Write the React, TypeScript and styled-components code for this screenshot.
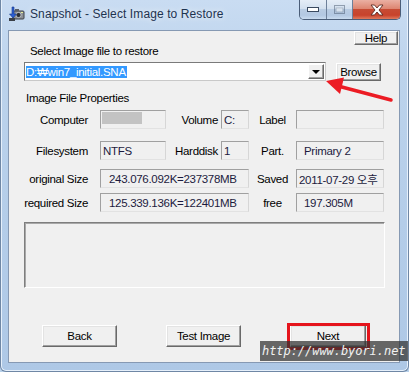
import React from "react";
import styled, { createGlobalStyle } from "styled-components";

const GlobalStyle = createGlobalStyle`
  html, body {
    margin: 0;
    padding: 0;
    width: 409px;
    height: 372px;
    overflow: hidden;
    background: #b9d1ea;
  }
`;

const Window = styled.div`
  position: relative;
  box-sizing: border-box;
  width: 409px;
  height: 372px;
  display: flex;
  flex-direction: column;
  border: 1px solid #6f87a5;
  border-top: none;
  border-radius: 0 0 6px 6px;
  background: linear-gradient(180deg, #c9dcf2 0%, #bcd3ec 20%, #b4cde9 60%, #aec8e6 100%);
  box-shadow: inset 1px 0 0 #e6f0fb, inset -1px 0 0 #e6f0fb, inset 0 -1px 0 #e6f0fb;
  font-family: "Liberation Sans", Arial, sans-serif;
  overflow: hidden;
`;

const TitleBar = styled.div`
  height: 30px;
  display: flex;
  align-items: flex-start;
  padding: 0 7px 0 7px;
`;

const TitleIcon = styled.svg`
  width: 17px;
  height: 16px;
  margin-top: 6px;
  flex: none;
`;

const TitleText = styled.div`
  margin: 6px 0 0 5px;
  font-size: 12px;
  line-height: 16px;
  color: #1e3350;
  letter-spacing: 0.1px;
  text-shadow: 0 0 6px rgba(255, 255, 255, 0.9);
`;

const WinButtons = styled.div`
  margin-left: auto;
  display: flex;
  height: 19px;
  border: 1px solid #4a5d78;
  border-top: none;
  border-radius: 0 0 5px 5px;
  overflow: hidden;
`;

const WinButton = styled.div<{ $w: number; $close?: boolean; $dim?: boolean }>`
  width: ${({ $w }) => $w}px;
  display: flex;
  align-items: center;
  justify-content: center;
  background: ${({ $close }) =>
    $close
      ? "linear-gradient(180deg, #eab0a3 0%, #dd8672 45%, #c64b34 50%, #c8432c 80%, #e07a5d 100%)"
      : "linear-gradient(180deg, #e5edf7 0%, #d3e0ef 45%, #b9cce3 50%, #b3c8e2 80%, #c9dbef 100%)"};
  & + & {
    border-left: 1px solid #6d809a;
  }
  svg {
    opacity: ${({ $dim }) => ($dim ? 0.45 : 1)};
  }
`;

const Client = styled.div`
  position: relative;
  flex: 1;
  margin: 0 8px 8px 7px;
  background: #f0f0f0;
  border: 1px solid #8699b3;
  display: flex;
  flex-direction: column;
`;

const HelpRow = styled.div`
  display: flex;
  justify-content: flex-end;
  padding-right: 1px;
`;

const ClassicButton = styled.button<{ $w: number; $h: number; $marked?: boolean }>`
  position: relative;
  box-sizing: border-box;
  width: ${({ $w }) => $w}px;
  height: ${({ $h }) => $h}px;
  padding: 0;
  margin: 0;
  background: #f0f0f0;
  border: 1px solid;
  border-color: #ffffff #696969 #696969 #ffffff;
  box-shadow: inset -1px -1px 0 #a0a0a0, inset 1px 1px 0 #e3e3e3;
  font-family: "Liberation Sans", Arial, sans-serif;
  font-size: 11.5px;
  letter-spacing: -0.3px;
  color: #000;
  display: flex;
  align-items: center;
  justify-content: center;
  &::after {
    content: "";
    display: ${({ $marked }) => ($marked ? "block" : "none")};
    position: absolute;
    top: -3px;
    left: -4px;
    right: -5px;
    bottom: -4px;
    border: 3px solid #e5141c;
  }
`;

const SectionLabel = styled.div<{ $left: number; $top: number }>`
  padding-left: ${({ $left }) => $left}px;
  margin-top: ${({ $top }) => $top}px;
  font-size: 11.5px;
  line-height: 13px;
  letter-spacing: -0.3px;
  color: #000;
`;

const ComboRow = styled.div`
  display: flex;
  align-items: center;
  gap: 10px;
  padding-left: 15px;
  margin-top: 4px;
`;

const Combo = styled.div`
  box-sizing: border-box;
  width: 302px;
  height: 19px;
  background: #fff;
  border: 1px solid;
  border-color: #7a7a7a #c9c9c9 #c9c9c9 #7a7a7a;
  display: flex;
  align-items: center;
  padding: 0 1px 0 1px;
`;

const ComboValue = styled.span`
  background: #3399ff;
  color: #fff;
  font-size: 11.5px;
  line-height: 12px;
  letter-spacing: -0.3px;
  padding-right: 1px;
`;

const DropButton = styled.div`
  margin-left: auto;
  box-sizing: border-box;
  width: 16px;
  height: 15px;
  background: #f0f0f0;
  border: 1px solid;
  border-color: #ffffff #696969 #696969 #ffffff;
  box-shadow: inset -1px -1px 0 #a0a0a0;
  display: flex;
  align-items: center;
  justify-content: center;
  &::before {
    content: "";
    border-left: 4px solid transparent;
    border-right: 4px solid transparent;
    border-top: 4px solid #000;
    margin-top: 1px;
  }
`;

const PropRow = styled.div<{ $top: number }>`
  display: grid;
  grid-template-columns: 76px 66px 55px 28px 47px 88px;
  grid-template-rows: 19px;
  align-items: center;
  padding-left: 15px;
  margin-top: ${({ $top }) => $top}px;
`;

const PropLabel = styled.div<{ $align?: string; $pad?: number }>`
  text-align: ${({ $align }) => $align || "right"};
  padding-right: ${({ $pad }) => $pad ?? 0}px;
  font-size: 11.5px;
  letter-spacing: -0.3px;
  color: #000;
  white-space: nowrap;
`;

const Field = styled.div<{ $pad?: number; $span?: string }>`
  grid-column: ${({ $span }) => $span || "auto"};
  box-sizing: border-box;
  height: 19px;
  display: flex;
  align-items: center;
  padding-left: ${({ $pad }) => $pad ?? 2}px;
  border: 1px solid;
  border-color: #a0a0a0 #d6d6d6 #e2e2e2 #a0a0a0;
  background: #f0f0f0;
  font-size: 11.5px;
  letter-spacing: -0.3px;
  color: #1c1b3e;
  white-space: nowrap;
  font-family: "Liberation Sans", "Noto Sans CJK KR", sans-serif;
`;

const Blur = styled.div`
  width: 40px;
  height: 12px;
  background: #c3c3c3;
  margin-left: -1px;
  margin-top: -3px;
`;

const MessageBox = styled.div`
  box-sizing: border-box;
  width: 361px;
  height: 66px;
  margin: 10px 0 0 15px;
  border: 1px solid;
  border-color: #7e7e7e #ffffff #ffffff #7e7e7e;
  box-shadow: inset 1px 1px 0 #a8a8a8;
`;

const ButtonRow = styled.div`
  display: flex;
  gap: 49px;
  padding-left: 33px;
  margin-top: 37px;
`;

const Arrow = styled.svg`
  position: absolute;
  left: 318px;
  top: 72px;
  width: 80px;
  height: 34px;
  pointer-events: none;
`;

const Watermark = styled.div`
  position: absolute;
  right: 0;
  bottom: 10px;
  width: 148px;
  height: 20px;
  background: rgba(48, 48, 48, 0.72);
  color: #f2f2f2;
  font-family: "DejaVu Sans Mono", "Liberation Mono", monospace;
  font-style: italic;
  font-size: 12px;
  line-height: 20px;
  padding-left: 2px;
  box-sizing: border-box;
  white-space: nowrap;
  letter-spacing: -0.05px;
`;

export default function App() {
  return (
    <>
      <GlobalStyle />
      <Window>
        <TitleBar>
          <TitleIcon viewBox="0 0 17 16">
            <rect x="5" y="5" width="11" height="8" rx="1" fill="#8b8f95" stroke="#3d4148" />
            <rect x="7" y="3" width="4" height="2" fill="#5b6068" />
            <circle cx="10.5" cy="9" r="2.6" fill="#2b2f36" stroke="#d6d9de" strokeWidth="0.8" />
            <rect x="13" y="6" width="2" height="1" fill="#e8f09a" />
            <path d="M4 1 L4 8 L1.5 8 L5 12 L8.5 8 L6 8 L6 1 Z" fill="#2c5fd2" stroke="#173a8a" strokeWidth="0.6" />
            <rect x="1" y="12" width="6" height="3" fill="#3a3f47" />
          </TitleIcon>
          <TitleText>Snapshot - Select Image to Restore</TitleText>
          <WinButtons>
            <WinButton $w={26}>
              <svg width="12" height="5" viewBox="0 0 12 5">
                <rect x="0.5" y="0.5" width="11" height="4" fill="#fff" stroke="#3a4a60" />
              </svg>
            </WinButton>
            <WinButton $w={25} $dim>
              <svg width="11" height="9" viewBox="0 0 11 9">
                <rect x="0.5" y="0.5" width="10" height="8" fill="none" stroke="#3a4a60" />
                <rect x="2" y="3" width="7" height="4" fill="#fff" stroke="#3a4a60" strokeWidth="0.6" />
              </svg>
            </WinButton>
            <WinButton $w={47} $close>
              <svg width="14" height="12" viewBox="0 0 14 12">
                <path
                  d="M1 1 L4.5 1 L7 4 L9.5 1 L13 1 L9 6 L13 11 L9.5 11 L7 8 L4.5 11 L1 11 L5 6 Z"
                  fill="#fff"
                  stroke="#5a2a22"
                  strokeWidth="0.9"
                  strokeLinejoin="round"
                />
              </svg>
            </WinButton>
          </WinButtons>
        </TitleBar>

        <Client>
          <HelpRow>
            <ClassicButton $w={44} $h={14}>Help</ClassicButton>
          </HelpRow>
          <SectionLabel $left={21} $top={0}>Select Image file to restore</SectionLabel>
          <ComboRow>
            <Combo>
              <ComboValue>D:₩win7_initial.SNA</ComboValue>
              <DropButton />
            </Combo>
            <ClassicButton $w={45} $h={18}>Browse</ClassicButton>
          </ComboRow>
          <SectionLabel $left={17} $top={11}>Image File Properties</SectionLabel>

          <PropRow $top={5}>
            <PropLabel $pad={12}>Computer</PropLabel>
            <Field>
              <Blur />
            </Field>
            <PropLabel $pad={3}>Volume</PropLabel>
            <Field>C:</Field>
            <PropLabel $align="center">Label</PropLabel>
            <Field />
          </PropRow>
          <PropRow $top={12}>
            <PropLabel $pad={12}>Filesystem</PropLabel>
            <Field>NTFS</Field>
            <PropLabel $pad={3}>Harddisk</PropLabel>
            <Field>1</Field>
            <PropLabel $align="center">Part.</PropLabel>
            <Field $pad={7}>Primary 2</Field>
          </PropRow>
          <PropRow $top={9}>
            <PropLabel $pad={12}>original Size</PropLabel>
            <Field $span="2 / 5" $pad={8}>243.076.092K=237378MB</Field>
            <PropLabel $align="center">Saved</PropLabel>
            <Field $pad={2}>2011-07-29 오후</Field>
          </PropRow>
          <PropRow $top={5}>
            <PropLabel $pad={12}>required Size</PropLabel>
            <Field $span="2 / 5" $pad={8}>125.339.136K=122401MB</Field>
            <PropLabel $align="center">free</PropLabel>
            <Field $pad={7}>197.305M</Field>
          </PropRow>

          <MessageBox />

          <ButtonRow>
            <ClassicButton $w={75} $h={22}>Back</ClassicButton>
            <ClassicButton $w={75} $h={22}>Test Image</ClassicButton>
            <ClassicButton $w={76} $h={22} $marked>Next</ClassicButton>
          </ButtonRow>
        </Client>

        <Arrow viewBox="318 72 80 34">
          <line x1="337" y1="86" x2="390" y2="100" stroke="#ec1c24" strokeWidth="3.5" strokeLinecap="round" />
          <polygon points="325,81 343,77.5 339,94" fill="#ec1c24" />
        </Arrow>

        <Watermark>http://www.byori.net</Watermark>
      </Window>
    </>
  );
}
